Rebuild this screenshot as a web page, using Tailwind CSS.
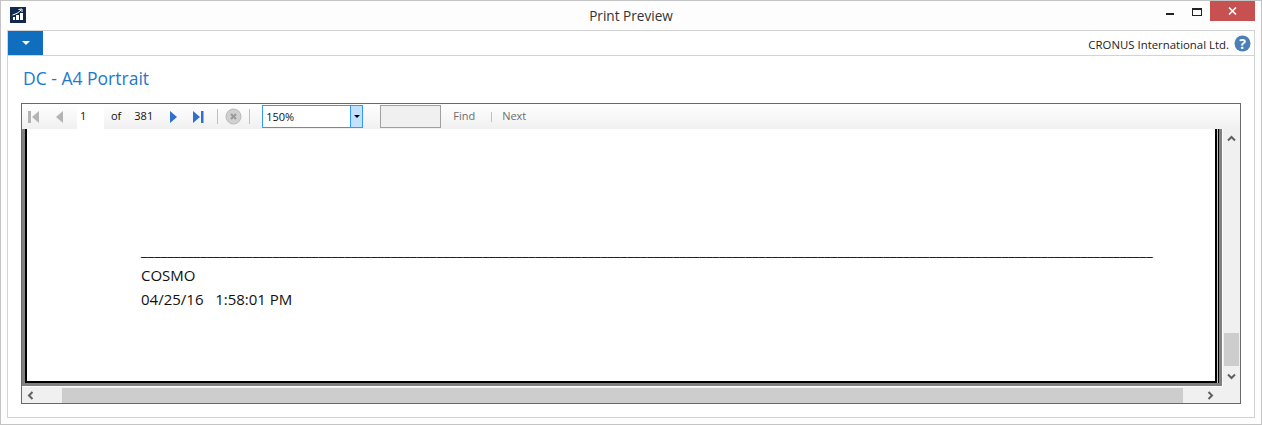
<!DOCTYPE html>
<html>
<head>
<meta charset="utf-8">
<script src="https://cdn.jsdelivr.net/npm/@tailwindcss/browser@4"></script>
</head>
<body class="w-[1262px] h-[425px] overflow-hidden bg-white font-['Open_Sans',sans-serif]">
<div class="w-full h-full flex flex-col border border-[#c4c4c4] bg-[#fdfdfd]">
    <!-- title bar -->
    <div class="relative h-[29px] shrink-0 flex items-start">
        <svg class="ml-[9px] mt-[6px]" width="16" height="16" viewBox="0 0 16 16">
            <rect width="16" height="16" fill="#12294f"/>
            <rect x="3" y="10" width="2" height="3" fill="#fff"/>
            <rect x="6" y="8" width="3" height="5" fill="#fff"/>
            <rect x="10" y="6" width="3" height="7" fill="#fff"/>
            <path d="M2.5 8 C6 7 9 5.5 11 3 M8.5 2.5 L12 2 L12 5" stroke="#fff" fill="none"/>
        </svg>
        <div class="absolute inset-x-0 top-[5px] text-center text-[13.6px] leading-[20px] text-[#333]">Print Preview</div>
        <div class="ml-auto mr-[6px] flex items-start">
            <div class="w-[38px] h-[20px] flex items-end justify-center pb-[6px] pl-[14px]"><div class="w-[8px] h-[2px] bg-[#222]"></div></div>
            <div class="w-[28px] h-[20px] flex justify-center pt-[7px] pl-[2px]"><div class="w-[10px] h-[8px] border border-t-2 border-[#222]"></div></div>
            <div class="w-[45px] h-[20px] bg-[#c75050] flex items-center justify-center">
                <svg width="9" height="8" viewBox="0 0 9 8"><path d="M1 0.5 L8 7.5 M8 0.5 L1 7.5" stroke="#fff" stroke-width="1.6"/></svg>
            </div>
        </div>
    </div>
    <!-- inner panel -->
    <div class="mx-[6px] h-[388px] shrink-0 border border-[#d3d3d3] bg-white flex flex-col">
        <div class="h-[25px] shrink-0 border-b border-[#d3d3d3] flex">
            <div class="w-[35px] h-[24px] bg-[#106ebe] flex items-center justify-center">
                <div class="w-0 h-0 border-x-[4px] border-x-transparent border-t-[4px] border-t-white"></div>
            </div>
            <div class="ml-auto flex items-center pr-[3px] pt-[1px]">
                <span class="text-[11.4px] text-[#222] mr-[5px] mt-[2px]">CRONUS International Ltd.</span>
                <svg width="17" height="17" viewBox="0 0 17 17">
                    <circle cx="8.5" cy="8.5" r="8" fill="#4a7fb8"/>
                    <text x="8.5" y="13.5" text-anchor="middle" font-size="14" font-weight="700" fill="#fff" font-family="Open Sans">?</text>
                </svg>
            </div>
        </div>
        <div class="h-[47px] shrink-0 pl-[15px] pt-[11px] text-[17.5px] leading-[22px] text-[#1e78cd]">DC - A4 Portrait</div>
        <!-- report viewer -->
        <div class="ml-[13px] w-[1220px] h-[301px] shrink-0 border border-[#696969] flex flex-col">
            <div class="h-[25px] shrink-0 bg-gradient-to-b from-white to-[#f0f0f0] flex items-center text-[11px] text-[#111]">
                <svg class="ml-[6px]" width="12" height="14" viewBox="0 0 12 14"><rect x="0" y="1" width="3" height="12" fill="#b4b4b4"/><path d="M11 1 V13 L4 7 Z" fill="#b4b4b4"/></svg>
                <svg class="ml-[15px]" width="9" height="14" viewBox="0 0 9 14"><path d="M8 1 V13 L1 7 Z" fill="#b4b4b4"/></svg>
                <div class="ml-[13px] w-[27px] h-[25px] bg-white pl-[3px] leading-[24px]">1</div>
                <span class="ml-[7px]">of</span>
                <span class="ml-[13px]">381</span>
                <svg class="ml-[16px]" width="9" height="14" viewBox="0 0 9 14"><path d="M1 1 V13 L8 7 Z" fill="#2f6fd0"/></svg>
                <svg class="ml-[14px]" width="12" height="14" viewBox="0 0 12 14"><path d="M1 1 V13 L8 7 Z" fill="#2f6fd0"/><rect x="9" y="1" width="2.5" height="12" fill="#2f6fd0"/></svg>
                <div class="ml-[13px] w-px h-[15px] bg-[#c0c0c0]"></div>
                <svg class="ml-[7px]" width="17" height="17" viewBox="0 0 17 17"><circle cx="8.5" cy="8.5" r="7.5" fill="#d0d0d0" stroke="#b8b8b8"/><path d="M6 6 L11 11 M11 6 L6 11" stroke="#9a9a9a" stroke-width="2"/></svg>
                <div class="ml-[7px] w-px h-[15px] bg-[#c0c0c0]"></div>
                <div class="ml-[12px] w-[101px] h-[23px] border border-[#3399ff] bg-white flex">
                    <span class="flex-1 pl-[3px] leading-[21px]">150%</span>
                    <div class="w-[12px] border-l border-[#3399ff] bg-[#c4e1fb] flex items-center justify-center">
                        <div class="w-0 h-0 border-x-[3px] border-x-transparent border-t-[3px] border-t-black"></div>
                    </div>
                </div>
                <div class="ml-[17px] w-[61px] h-[23px] border border-[#a0a0a0] bg-[#f0f0f0]"></div>
                <span class="ml-[12px] text-[#6d6d6d]">Find</span>
                <div class="ml-[16px] w-px h-[10px] bg-[#c0c0c0]"></div>
                <span class="ml-[10px] text-[#6d6d6d]">Next</span>
            </div>
            <div class="flex-1 flex min-h-0">
                <div class="w-[1201px] h-[258px] bg-[#808080] pl-[3px] pr-[3px] pb-[3px] border-b border-r border-white">
                    <div class="h-full border-r border-black pr-px bg-[#c8c8c8]">
                        <div class="h-full border-l-2 border-b-2 border-r-2 border-black bg-white flex flex-col">
                            <div class="ml-[114px] mt-[111px] h-[20px] whitespace-nowrap text-[15px] leading-[20px] text-[#111]">__________________________________________________________________________________________________________________________________________________________</div>
                            <div class="ml-[114px] mt-[5px] text-[15px] leading-[20px] text-[#111]">COSMO</div>
                            <div class="ml-[114px] mt-[4px] text-[15px] leading-[20px] text-[#111] whitespace-pre">04/25/16   1:58:01 PM</div>
                        </div>
                    </div>
                </div>
                <!-- vertical scrollbar -->
                <div class="w-[17px] h-[258px] bg-[#f0f0f0] flex flex-col items-center">
                    <svg class="mt-[6px]" width="9" height="7" viewBox="0 0 9 7"><path d="M1 5.5 L4.5 2 L8 5.5" fill="none" stroke="#606060" stroke-width="2"/></svg>
                    <div class="mt-[191px] w-[15px] h-[33px] bg-[#cdcdcd]"></div>
                    <svg class="mt-[7px]" width="9" height="7" viewBox="0 0 9 7"><path d="M1 1.5 L4.5 5 L8 1.5" fill="none" stroke="#606060" stroke-width="2"/></svg>
                </div>
            </div>
            <!-- horizontal scrollbar -->
            <div class="h-[16px] shrink-0 bg-[#f0f0f0] flex items-center">
                <svg class="ml-[5px]" width="7" height="9" viewBox="0 0 7 9"><path d="M5.5 1 L2 4.5 L5.5 8" fill="none" stroke="#606060" stroke-width="2"/></svg>
                <div class="ml-[28px] w-[1121px] h-[15px] bg-[#cdcdcd]"></div>
                <svg class="ml-[24px]" width="7" height="9" viewBox="0 0 7 9"><path d="M1.5 1 L5 4.5 L1.5 8" fill="none" stroke="#606060" stroke-width="2"/></svg>
            </div>
        </div>
    </div>
</div>
</body>
</html>
